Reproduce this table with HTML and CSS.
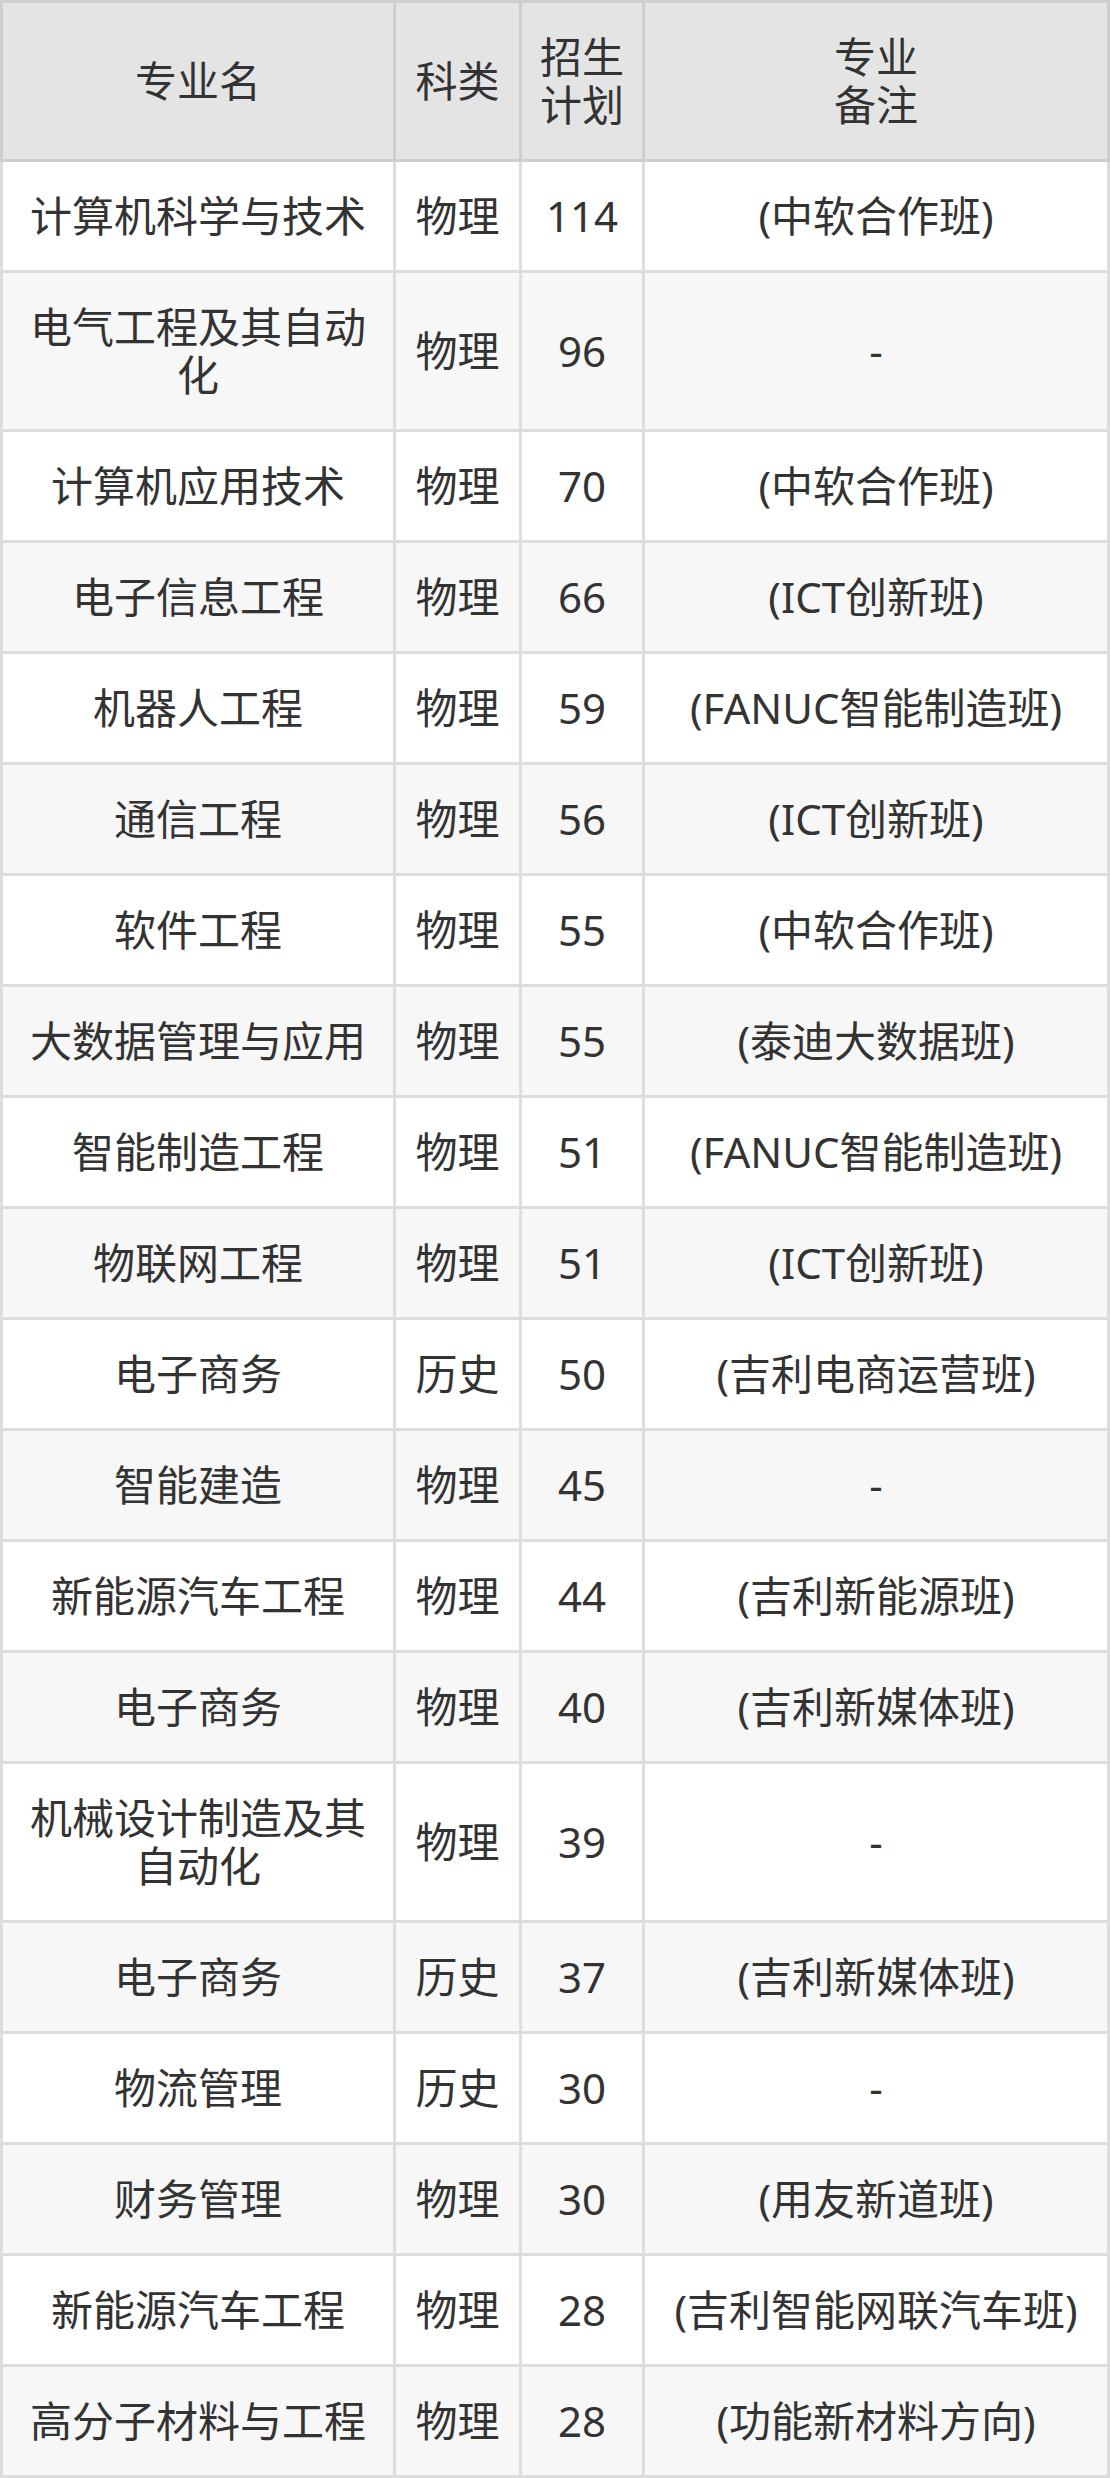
FILE: index.html
```html
<!DOCTYPE html>
<html lang="zh-CN">
<head>
<meta charset="utf-8">
<title>招生计划</title>
<link rel="stylesheet" href="styles.css">
</head>
<body>
<table class="plan">
  <colgroup>
    <col class="c-name">
    <col class="c-type">
    <col class="c-num">
    <col class="c-note">
  </colgroup>
  <thead>
    <tr><th>专业名</th><th>科类</th><th>招生计划</th><th>专业<br>备注</th></tr>
  </thead>
  <tbody>
    <tr><td>计算机科学与技术</td><td>物理</td><td>114</td><td>(中软合作班)</td></tr>
    <tr><td>电气工程及其自动化</td><td>物理</td><td>96</td><td>-</td></tr>
    <tr><td>计算机应用技术</td><td>物理</td><td>70</td><td>(中软合作班)</td></tr>
    <tr><td>电子信息工程</td><td>物理</td><td>66</td><td>(ICT创新班)</td></tr>
    <tr><td>机器人工程</td><td>物理</td><td>59</td><td>(FANUC智能制造班)</td></tr>
    <tr><td>通信工程</td><td>物理</td><td>56</td><td>(ICT创新班)</td></tr>
    <tr><td>软件工程</td><td>物理</td><td>55</td><td>(中软合作班)</td></tr>
    <tr><td>大数据管理与应用</td><td>物理</td><td>55</td><td>(泰迪大数据班)</td></tr>
    <tr><td>智能制造工程</td><td>物理</td><td>51</td><td>(FANUC智能制造班)</td></tr>
    <tr><td>物联网工程</td><td>物理</td><td>51</td><td>(ICT创新班)</td></tr>
    <tr><td>电子商务</td><td>历史</td><td>50</td><td>(吉利电商运营班)</td></tr>
    <tr><td>智能建造</td><td>物理</td><td>45</td><td>-</td></tr>
    <tr><td>新能源汽车工程</td><td>物理</td><td>44</td><td>(吉利新能源班)</td></tr>
    <tr><td>电子商务</td><td>物理</td><td>40</td><td>(吉利新媒体班)</td></tr>
    <tr><td>机械设计制造及其自动化</td><td>物理</td><td>39</td><td>-</td></tr>
    <tr><td>电子商务</td><td>历史</td><td>37</td><td>(吉利新媒体班)</td></tr>
    <tr><td>物流管理</td><td>历史</td><td>30</td><td>-</td></tr>
    <tr><td>财务管理</td><td>物理</td><td>30</td><td>(用友新道班)</td></tr>
    <tr><td>新能源汽车工程</td><td>物理</td><td>28</td><td>(吉利智能网联汽车班)</td></tr>
    <tr><td>高分子材料与工程</td><td>物理</td><td>28</td><td>(功能新材料方向)</td></tr>
  </tbody>
</table>
</body>
</html>
```

FILE: styles.css
```css
html, body {
  margin: 0;
  padding: 0;
  background: #ffffff;
}

body {
  font-family: "Noto Sans", "Noto Sans CJK SC", sans-serif;
  color: #333333;
}

.plan {
  width: 1110px;
  border-collapse: separate;
  border-spacing: 0;
  table-layout: fixed;
  font-size: 42px;
  line-height: 48px;
}

.c-name { width: 396px; }
.c-type { width: 126px; }
.c-num { width: 123px; }
.c-note { width: 465px; }

.plan th,
.plan td {
  padding: 30px 10px;
  text-align: center;
  vertical-align: middle;
}

.plan th {
  font-weight: normal;
  background: #e4e4e4;
  border-right: 3px solid #cecece;
  border-bottom: 3px solid #cecece;
  border-top: 3px solid #cecece;
}

.plan th:first-child {
  border-left: 3px solid #cecece;
}

.plan td {
  border-right: 3px solid #dddddd;
  border-bottom: 3px solid #dddddd;
}

.plan td:first-child {
  border-left: 3px solid #dddddd;
}

.plan tbody tr:nth-child(even) td {
  background: #f7f7f7;
}

.plan tbody tr:nth-child(odd) td {
  background: #ffffff;
}
```
